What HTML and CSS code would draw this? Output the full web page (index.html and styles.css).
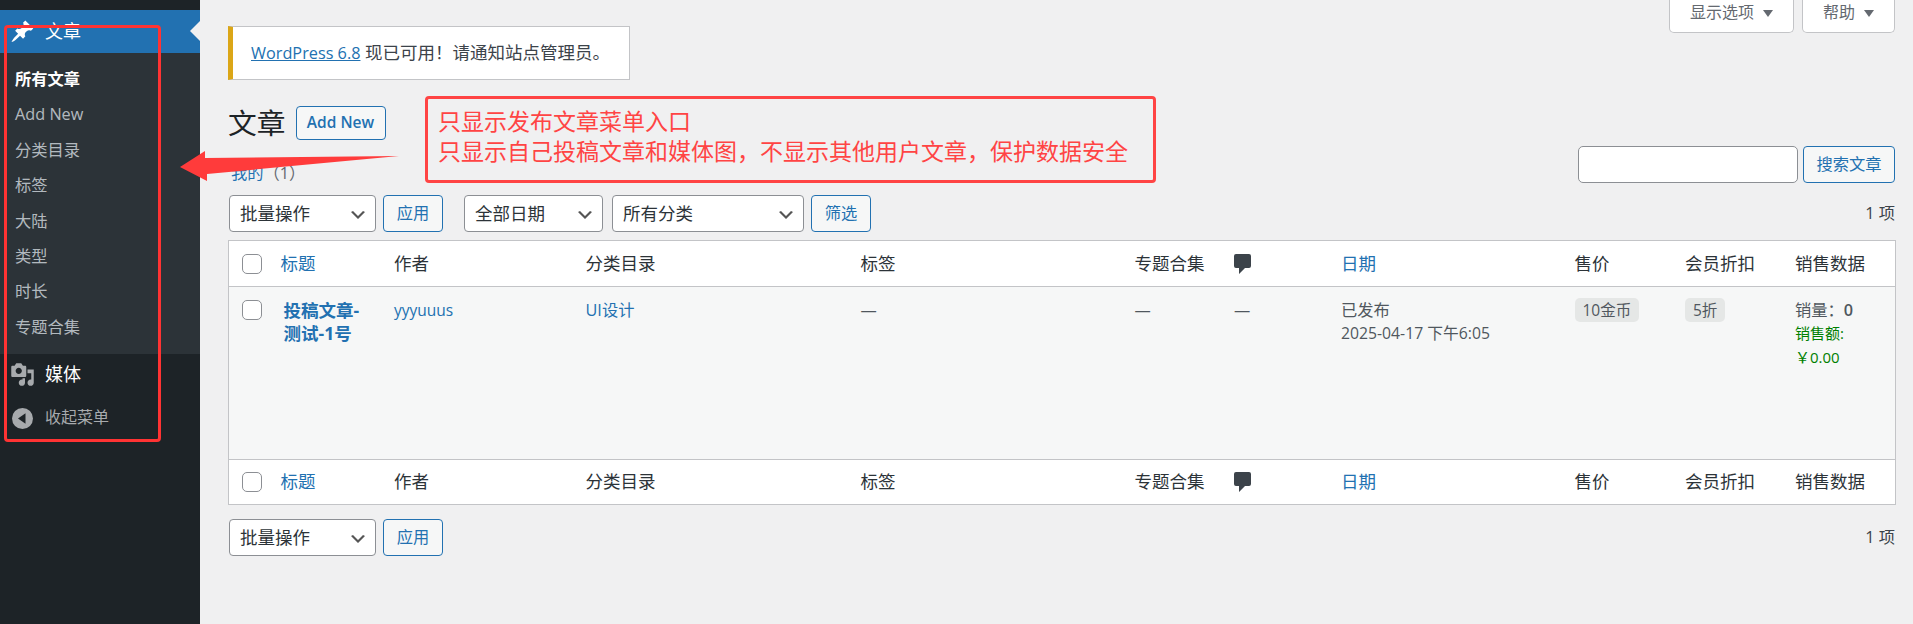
FILE: index.html
```html
<!DOCTYPE html>
<html lang="zh-CN">
<head>
  <meta charset="utf-8">
  <title>文章</title>
  <link rel="stylesheet" href="styles.css">
</head>
<body>
  <aside class="sidebar">
    <div class="menu-current">
      <svg class="menu-icon" viewBox="0 0 20 20"><path d="M10.44 3.02l1.82-1.82 6.36 6.35-1.83 1.82c-1.05-.68-2.48-.57-3.41.36l-.75.75c-.92.93-1.04 2.35-.35 3.41l-1.83 1.82-2.41-2.41-2.8 2.79c-.42.42-3.38 2.71-3.8 2.29s1.86-3.39 2.28-3.81l2.79-2.79L4.1 9.36l1.83-1.82c1.05.69 2.48.57 3.4-.36l.75-.75c.93-.92 1.05-2.35.36-3.41z"/></svg>
      <span class="menu-label">文章</span>
    </div>
    <ul class="submenu">
      <li class="current">所有文章</li>
      <li>Add New</li>
      <li>分类目录</li>
      <li>标签</li>
      <li>大陆</li>
      <li>类型</li>
      <li>时长</li>
      <li>专题合集</li>
    </ul>
    <div class="menu-item">
      <svg class="menu-icon" viewBox="0 0 20 20"><path d="M13 11V4c0-.55-.45-1-1-1h-1.67L9 1H5L3.67 3H2c-.55 0-1 .45-1 1v7c0 .55.45 1 1 1h10c.55 0 1-.45 1-1zM7 4.5c1.38 0 2.5 1.12 2.5 2.5S8.38 9.5 7 9.5 4.5 8.38 4.5 7 5.62 4.5 7 4.5zM14 6h5v10.5c0 1.38-1.12 2.5-2.5 2.5S14 17.88 14 16.5s1.12-2.5 2.5-2.5c.17 0 .34.02.5.05V9h-3V6zm-4 8.05V13h2v3.5c0 1.38-1.12 2.5-2.5 2.5S7 17.88 7 16.5 8.12 14 9.5 14c.17 0 .34.02.5.05z"/></svg>
      <span class="menu-label">媒体</span>
    </div>
    <div class="menu-collapse">
      <svg class="collapse-icon" viewBox="0 0 21 21"><circle cx="10.5" cy="10.5" r="10.5"/><path class="collapse-arrow" d="M13.5 5.2v10.600L6 10.500z"/></svg>
      <span>收起菜单</span>
    </div>
  </aside>

  <main class="content">
    <div class="screen-tabs">
      <div class="screen-tab">显示选项<i class="tab-arrow"></i></div>
      <div class="screen-tab">帮助<i class="tab-arrow"></i></div>
    </div>

    <div class="notice"><a href="#">WordPress 6.8</a> 现已可用！请通知站点管理员。</div>

    <div class="page-head">
      <h1>文章</h1>
      <a class="btn btn-add" href="#">Add New</a>
    </div>

    <div class="search-row">
      <div class="subsub"><a href="#">我的</a>（1）</div>
      <div class="search-box">
        <input class="search-input" type="text">
        <button class="btn btn-search">搜索文章</button>
      </div>
    </div>

    <div class="tablenav">
      <select class="sel sel-bulk"><option>批量操作</option></select>
      <button class="btn btn-apply">应用</button>
      <select class="sel sel-date"><option>全部日期</option></select>
      <select class="sel sel-cat"><option>所有分类</option></select>
      <button class="btn btn-apply">筛选</button>
      <span class="count">1 项</span>
    </div>

    <table class="posts">
      <colgroup>
        <col class="c-cb"><col class="c-title"><col class="c-author"><col class="c-cat"><col class="c-tag"><col class="c-series"><col class="c-comment"><col class="c-date"><col class="c-price"><col class="c-disc"><col class="c-sales">
      </colgroup>
      <thead>
        <tr>
          <th class="cb"><input type="checkbox"></th>
          <th><a href="#">标题</a></th>
          <th>作者</th>
          <th>分类目录</th>
          <th>标签</th>
          <th>专题合集</th>
          <th><svg class="comment-icon" viewBox="0 0 17 20"><path d="M2 0h13a2 2 0 0 1 2 2v10a2 2 0 0 1-2 2h-4l-6 6v-6H2a2 2 0 0 1-2-2V2a2 2 0 0 1 2-2z"/></svg></th>
          <th><a href="#">日期</a></th>
          <th>售价</th>
          <th>会员折扣</th>
          <th>销售数据</th>
        </tr>
      </thead>
      <tbody>
        <tr>
          <td class="cb"><input type="checkbox"></td>
          <td><a class="row-title" href="#">投稿文章-测试-1号</a></td>
          <td><a class="author" href="#">yyyuuus</a></td>
          <td><a href="#">UI设计</a></td>
          <td>—</td>
          <td>—</td>
          <td>—</td>
          <td>已发布<div class="post-date">2025-04-17 下午6:05</div></td>
          <td><span class="badge">10金币</span></td>
          <td><span class="badge">5折</span></td>
          <td class="sales">销量：<b>0</b><div class="green">销售额:</div><div class="green">￥0.00</div></td>
        </tr>
      </tbody>
      <tfoot>
        <tr>
          <th class="cb"><input type="checkbox"></th>
          <th><a href="#">标题</a></th>
          <th>作者</th>
          <th>分类目录</th>
          <th>标签</th>
          <th>专题合集</th>
          <th><svg class="comment-icon" viewBox="0 0 17 20"><path d="M2 0h13a2 2 0 0 1 2 2v10a2 2 0 0 1-2 2h-4l-6 6v-6H2a2 2 0 0 1-2-2V2a2 2 0 0 1 2-2z"/></svg></th>
          <th><a href="#">日期</a></th>
          <th>售价</th>
          <th>会员折扣</th>
          <th>销售数据</th>
        </tr>
      </tfoot>
    </table>

    <div class="tablenav tablenav-bottom">
      <select class="sel sel-bulk"><option>批量操作</option></select>
      <button class="btn btn-apply">应用</button>
      <span class="count">1 项</span>
    </div>
  </main>

  <!-- annotations drawn on top of the screenshot -->
  <div class="mark-menu"></div>
  <svg class="mark-arrow" viewBox="0 0 225 34"><path d="M0 20L25 4l0 7L219 9 27 27l0 7z"/></svg>
  <div class="mark-note">只显示发布文章菜单入口<br>只显示自己投稿文章和媒体图，不显示其他用户文章，保护数据安全</div>
</body>
</html>
```

FILE: styles.css
```css
* {
  box-sizing: border-box;
}
html, body {
  height: 100%;
}
body {
  margin: 0;
  position: relative;
  display: flex;
  overflow: hidden;
  background: #f0f0f1;
  color: #3c434a;
  font-family: "Open Sans", "Noto Sans CJK SC", sans-serif;
  font-size: 16.25px;
  line-height: 23.4px;
}
a {
  color: #2271b1;
  text-decoration: none;
}

/* sidebar */
.sidebar {
  width: 200px;
  flex: none;
  padding-top: 10px;
  background: #1d2327;
}
.menu-current, .menu-item {
  display: flex;
  align-items: center;
  height: 43px;
  color: #fff;
  font-size: 18px;
}
.menu-current {
  position: relative;
  background: #2271b1;
}
.menu-current:after {
  content: "";
  position: absolute;
  right: 0;
  top: 11px;
  border: 10px solid transparent;
  border-right-color: #f0f0f1;
  border-left-width: 0;
}
.menu-icon {
  width: 25px;
  height: 25px;
  margin-left: 10px;
  fill: #fff;
}
.menu-item .menu-icon {
  fill: #a7aaad;
}
.menu-label {
  margin-left: 10px;
}
.submenu {
  list-style: none;
  margin: 0;
  padding: 9px 0 8px;
  height: 301px;
  background: #2c3338;
}
.submenu li {
  height: 35.4px;
  line-height: 35.4px;
  padding-left: 15px;
  color: rgba(240, 246, 252, .7);
}
.submenu .current {
  color: #fff;
  font-weight: 700;
}
.menu-item {
  margin-top: -1px;
}
.menu-collapse {
  display: flex;
  align-items: center;
  margin-top: 10px;
  height: 24px;
  color: #a7aaad;
  font-size: 16px;
}
.collapse-icon {
  width: 21px;
  height: 21px;
  margin: 0 12px;
  fill: #a7aaad;
}
.collapse-arrow {
  fill: #1d2327;
}

/* main column */
.content {
  flex: 1;
  min-width: 0;
  padding: 0 18px 0 28px;
}
.screen-tabs {
  display: flex;
  justify-content: flex-end;
  gap: 8px;
  height: 33px;
  margin-bottom: -7px;
}
.screen-tab {
  display: flex;
  align-items: center;
  height: 33px;
  padding: 0 20px 6px;
  background: #fff;
  border: 1px solid #c3c4c7;
  border-top: 0;
  border-radius: 0 0 5px 5px;
  color: #646970;
  font-size: 16px;
}
.tab-arrow {
  margin-left: 9px;
  border: 5px solid transparent;
  border-top: 7px solid #646970;
  border-bottom: 0;
}
.notice {
  width: 402px;
  height: 54px;
  padding: 14px 0 0 18px;
  background: #fff;
  border: 1px solid #c3c4c7;
  border-left: 5px solid #dba617;
  font-size: 17.5px;
}
.notice a {
  font-size: 16.25px;
  text-decoration: underline;
}
.page-head {
  display: flex;
  align-items: center;
  gap: 10px;
  margin-top: 26px;
  height: 34px;
}
h1 {
  margin: 0;
  font-size: 28.75px;
  font-weight: 400;
  color: #1d2327;
}
.btn {
  display: inline-flex;
  align-items: center;
  justify-content: center;
  padding: 0;
  background: #f6f7f7;
  border: 1px solid #2271b1;
  border-radius: 4px;
  color: #2271b1;
  font: inherit;
}
.btn-add {
  width: 90px;
  height: 34px;
  font-size: 15.5px;
  font-weight: 600;
}
.search-row {
  display: flex;
  justify-content: space-between;
  align-items: flex-end;
  margin-top: 6px;
  height: 37px;
}
.subsub {
  padding-left: 3px;
  margin-bottom: -2px;
  color: #646970;
}
.search-box {
  display: flex;
  gap: 5px;
}
.search-input {
  width: 220px;
  height: 37px;
  background: #fff;
  border: 1px solid #8c8f94;
  border-radius: 5px;
}
.btn-search {
  width: 92px;
  height: 37px;
}
.tablenav {
  display: flex;
  align-items: center;
  gap: 7px;
  margin-top: 12px;
  height: 37px;
  padding-left: 1px;
}
.tablenav-bottom {
  margin-top: 14px;
}
.sel {
  height: 37px;
  padding: 0 0 0 10px;
  appearance: none;
  background: #fff url("data:image/svg+xml,%3Csvg xmlns='http://www.w3.org/2000/svg' viewBox='0 0 20 20'%3E%3Cpath d='M5 6l5 5 5-5 2 1-7 7-7-7z' fill='%23555'/%3E%3C/svg%3E") no-repeat right 7px top 9px / 20px 20px;
  border: 1px solid #8c8f94;
  border-radius: 4px;
  color: #2c3338;
  font: inherit;
  font-size: 17.5px;
}
.sel-bulk {
  width: 147px;
}
.sel-date {
  width: 139px;
  margin-left: 14px;
}
.sel-cat {
  width: 192px;
  margin-left: 2px;
}
.btn-apply {
  width: 60px;
  height: 37px;
}
.count {
  margin-left: auto;
}

/* table */
.posts {
  width: 1668px;
  margin-top: 8px;
  table-layout: fixed;
  border-collapse: separate;
  border-spacing: 0;
  background: #fff;
  border: 1px solid #c3c4c7;
}
.c-cb { width: 39px; }
.c-title { width: 113.5px; }
.c-author { width: 191.5px; }
.c-cat { width: 275px; }
.c-tag { width: 274px; }
.c-series { width: 99.5px; }
.c-comment { width: 107px; }
.c-date { width: 233.5px; }
.c-price { width: 110.5px; }
.c-disc { width: 110px; }
.c-sales { width: 112.5px; }
.posts th {
  padding: 0 0 0 12.5px;
  font-size: 17.5px;
  font-weight: 400;
  text-align: left;
  color: #2c3338;
}
.posts thead th {
  height: 46px;
  border-bottom: 1px solid #c3c4c7;
}
.posts tfoot th {
  height: 45px;
  border-top: 1px solid #c3c4c7;
}
.posts td {
  height: 172px;
  padding: 12px 12.5px 0;
  vertical-align: top;
  background: #f6f7f7;
  color: #50575e;
}
.posts .cb {
  padding: 0 0 0 13px;
  line-height: 0;
}
.posts td.cb {
  padding-top: 13px;
}
.cb input {
  width: 20px;
  height: 20px;
  margin: 0;
  appearance: none;
  background: #fff;
  border: 1px solid #8c8f94;
  border-radius: 5px;
}
.row-title {
  display: block;
  padding-left: 3px;
  font-size: 17.5px;
  font-weight: 700;
}
.author {
  font-size: 15.5px;
}
.post-date {
  font-size: 15.75px;
}
.comment-icon {
  display: block;
  width: 17px;
  height: 20px;
  fill: #3c434a;
}
.badge {
  display: inline-block;
  height: 24px;
  margin-top: -1px;
  padding: 0 8px;
  line-height: 24px;
  background: #e5e7e6;
  border-radius: 5px;
  font-size: 15.5px;
}
.posts .sales {
  padding-right: 0;
}
.sales b {
  font-weight: 600;
}
.green {
  color: #008000;
  font-size: 15px;
}

/* annotations */
.mark-menu {
  position: absolute;
  left: 4px;
  top: 25px;
  width: 157px;
  height: 417px;
  border: 3px solid #f33;
  border-radius: 4px;
}
.mark-arrow {
  position: absolute;
  left: 180px;
  top: 147px;
  width: 225px;
  height: 34px;
  fill: #ff3b3b;
}
.mark-note {
  position: absolute;
  left: 425px;
  top: 96px;
  width: 731px;
  height: 87px;
  padding: 8px 0 0 10px;
  border: 3px solid #f44;
  border-radius: 4px;
  color: #f44;
  font-size: 23px;
  line-height: 29.5px;
}
```
